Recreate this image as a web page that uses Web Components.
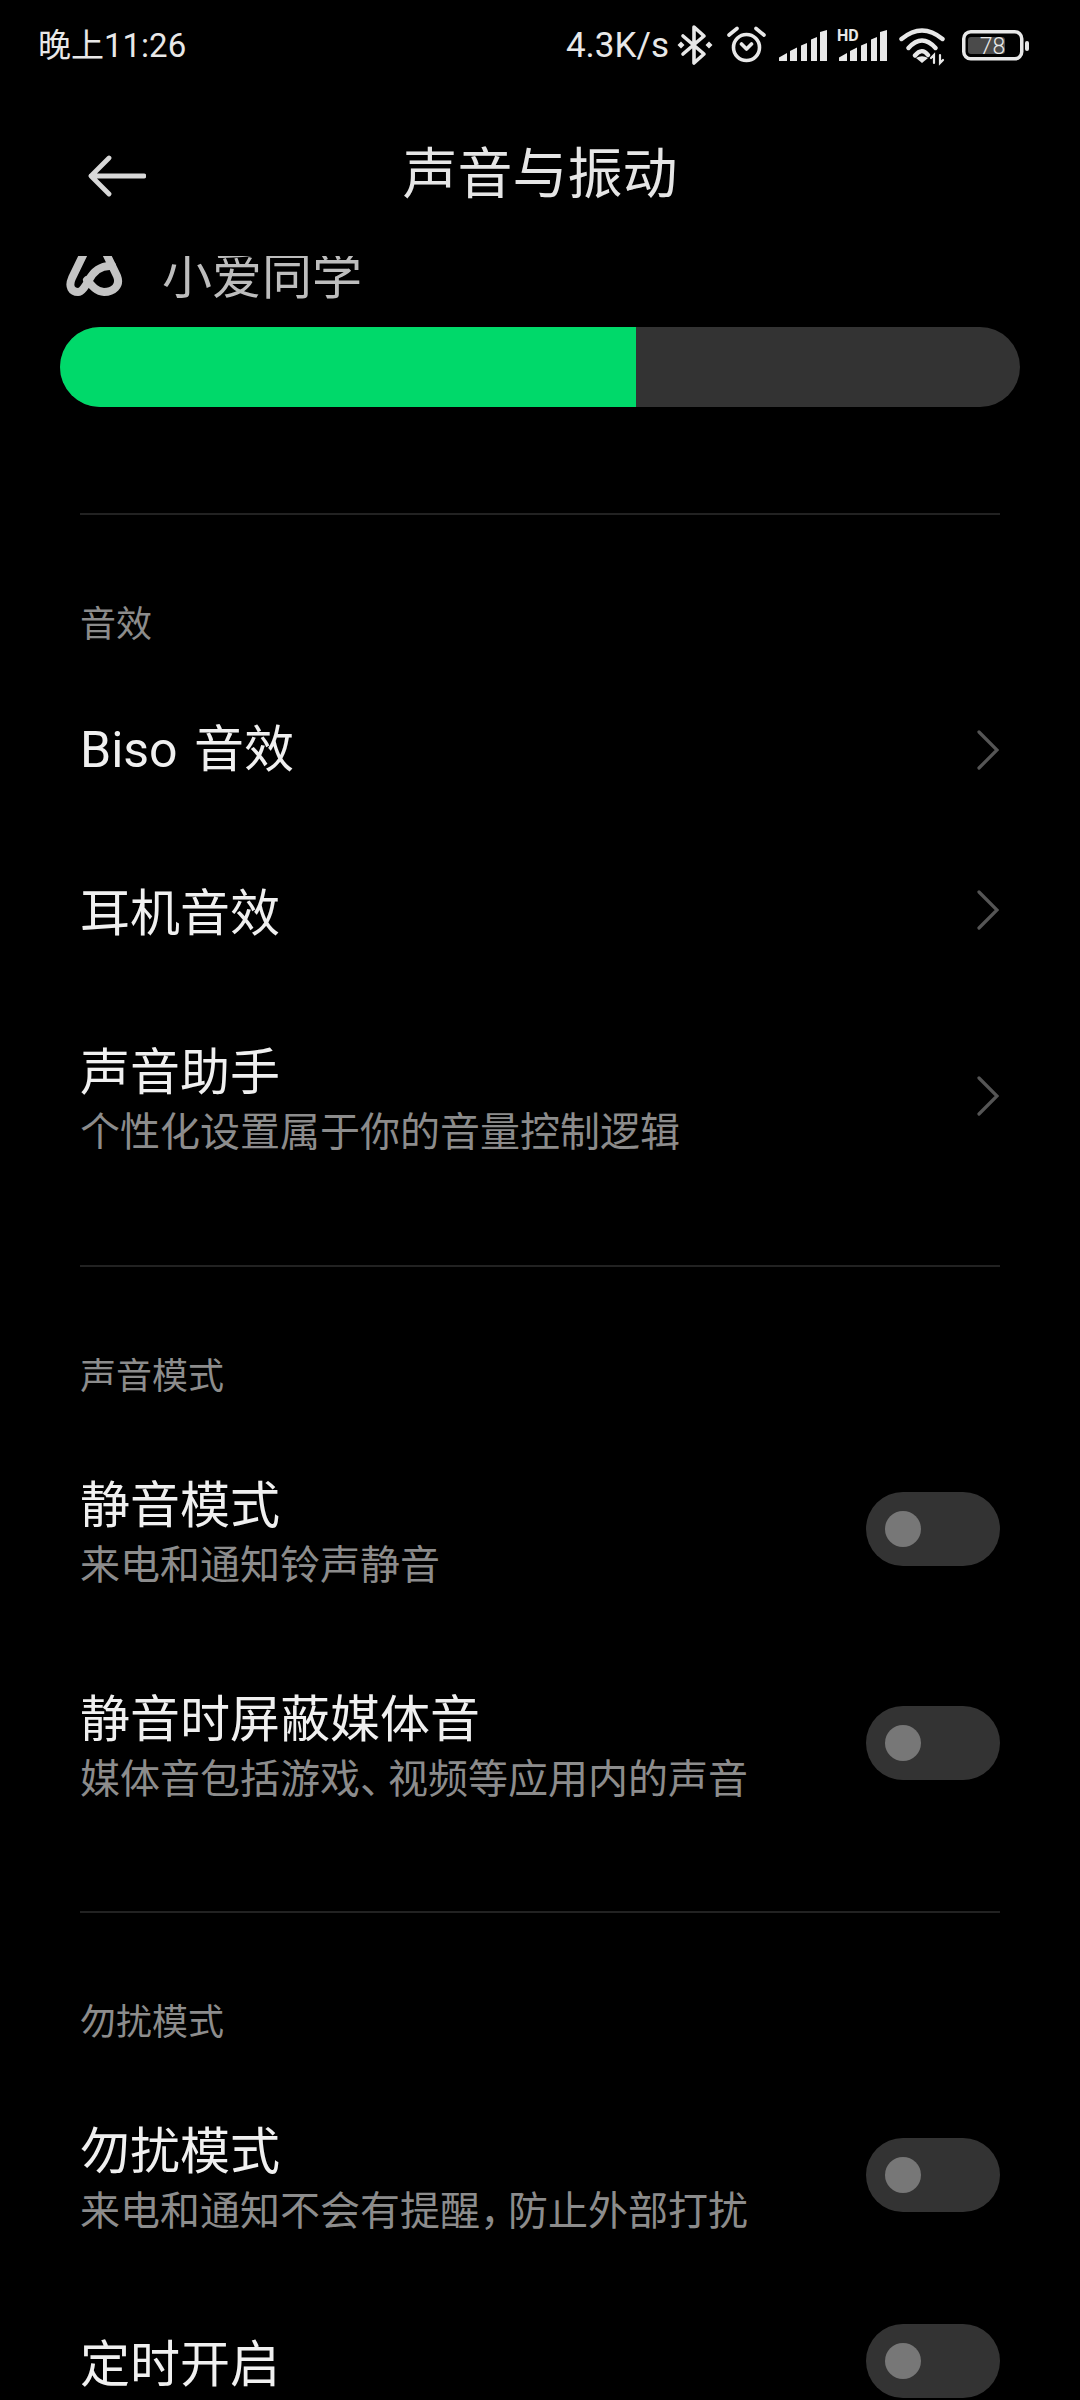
<!DOCTYPE html>
<html lang="zh-CN"><head><meta charset="utf-8"><style>
html,body{margin:0;padding:0;background:#000}
body{font-family:"Noto Sans CJK SC",sans-serif}
</style></head><body>
<settings-page>
<status-bar slot="status"></status-bar>
<action-bar slot="bar">声音与振动</action-bar>
<div style="margin-top:-17px">
<assistant-row>小爱同学</assistant-row>
<volume-bar></volume-bar>
<settings-section label="音效" style="padding-top:106px;--b:24px">
<settings-row h="160" chevron title-text="Biso 音效"></settings-row>
<settings-row h="160" chevron title-text="耳机音效"></settings-row>
<settings-row h="212" chevron title-text="声音助手" sub="个性化设置属于你的音量控制逻辑"></settings-row>
</settings-section>
<settings-section label="声音模式" style="padding-top:63px">
<settings-row h="212" style="margin-bottom:2px" toggle title-text="静音模式" sub="来电和通知铃声静音"></settings-row>
<settings-row h="212" toggle title-text="静音时屏蔽媒体音" sub="媒体音包括游戏、视频等应用内的声音"></settings-row>
</settings-section>
<settings-section label="勿扰模式" style="padding-top:62px">
<settings-row h="212" toggle title-text="勿扰模式" sub="来电和通知不会有提醒，防止外部打扰"></settings-row>
<settings-row h="160" toggle title-text="定时开启"></settings-row>
</settings-section>
</div>
</settings-page>
<script>
function def(name,html,init){customElements.define(name,class extends HTMLElement{constructor(){super();this.attachShadow({mode:'open'}).innerHTML=html;if(init)init(this)}connectedCallback(){if(this.ready)this.ready()}})}
def('settings-page',`<style>:host{display:flex;flex-direction:column;width:1080px;height:2400px;overflow:hidden;background:#000}
.scroll{flex:1;overflow:hidden;min-height:0}</style><slot name="status"></slot><slot name="bar"></slot><div class="scroll"><slot></slot></div>`);
def('status-bar',`<style>:host{display:flex;align-items:center;height:92px;padding:0 51px 0 38px;box-sizing:border-box;color:#e8e8e8;font-family:Roboto,"Noto Sans CJK SC",sans-serif}
.t{flex:1;font-size:33px;line-height:40px;margin-top:-1px}.i{display:flex;align-items:center;}svg{display:block;flex:none}.sp{font-size:35px;line-height:40px;margin-top:-1px}</style>
<div class="t">晚上11:26</div><div class="i"><span class="sp">4.3K/s</span>
<svg style="margin-left:8px" width="36" height="44" viewBox="0 0 36 44" fill="none" stroke="#e8e8e8" stroke-width="3.6" stroke-linejoin="round" stroke-linecap="round"><path d="M6 12 27 30 17 39V3L27 12 6 30"/><path d="M0.500 21 4 17.500 7.500 21 4 24.500zM28.500 21 32 17.500 35.500 21 32 24.500z" fill="#e8e8e8" stroke="none"/></svg>
<svg style="margin-left:14px" width="39" height="44" viewBox="0 0 39 44" fill="none" stroke="#e8e8e8" stroke-width="3.6" stroke-linecap="round" stroke-linejoin="round"><circle cx="19.500" cy="23.500" r="13"/><path d="M14.500 20 19.500 25 24.500 20M2 11 10 4.500M37 11 29 4.500"/></svg>
<svg style="margin-left:13px" width="48" height="44" viewBox="0 0 48 44" fill="#e8e8e8"><path d="M0 37v-3.500l8-4.500v8zM11 37V27l7-3.500V37zM22 37V21.500l6-2.500v18zM32 37V15.500l6-2.500v24zM41 37V8l7-2v31z"/></svg>
<svg style="margin-left:10px" width="50" height="44" viewBox="0 0 50 44" fill="#e8e8e8"><path d="M2 37v-3.500l8-4.500v8zM13 37V27l7-3.500V37zM24 37V21.500l6-2.500v18zM34 37V15.500l6-2.500v24zM43 37V8l7-2v31z"/><text x="0" y="17" font-family="Roboto,sans-serif" font-weight="700" font-size="16">HD</text></svg>
<svg style="margin-left:12px" width="46" height="44" viewBox="0 0 46 44" fill="none" stroke="#e8e8e8" stroke-width="4.400" stroke-linecap="round"><path d="M2.500 15Q23-2 43.500 15M9.500 24Q23 9 36.500 24M16 31.500Q23 23 29 31"/><path d="M23 39l-6-5q6-3.500 12 0z" fill="#e8e8e8" stroke="none"/><path d="M35 39v-8l-3 3M41 31v8l3-3" stroke-width="2.200"/></svg>
<svg style="margin-left:17px" width="67" height="32" viewBox="0 0 67 32"><rect x="1.750" y="1.750" width="58" height="27" rx="7" fill="none" stroke="#e8e8e8" stroke-width="3.500"/><rect x="6" y="7" width="37" height="17" rx="3" fill="#4a4a4a"/><rect x="63" y="11" width="4" height="10" rx="2" fill="#e8e8e8"/><text x="30.500" y="24" text-anchor="middle" font-family="Roboto,sans-serif" font-weight="300" font-size="23" fill="#e8e8e8">78</text></svg>
</div>`);
def('action-bar',`<style>:host{display:flex;align-items:center;justify-content:center;position:relative;height:164px;padding-bottom:10px;box-sizing:border-box;color:#e6e6e6;font-size:55px;line-height:76px}
svg{position:absolute;left:88px;top:63px}</style>
<svg width="58" height="42" viewBox="0 0 58 42" fill="none" stroke="#d8d8d8" stroke-width="4.800" stroke-linecap="round" stroke-linejoin="round"><path d="M21 3 3 21 21 39M3 21H56"/></svg><slot></slot>`);
def('assistant-row',`<style>:host{display:flex;align-items:center;height:72px;padding-left:60px;color:#bdbdbd;font-size:50px;line-height:72px}
svg{margin-right:32px;display:block;flex:none}span{margin-top:-6px}</style>
<svg width="70" height="72" viewBox="0 0 70 72" fill="none" stroke="#c4c4c4" stroke-width="8" stroke-linecap="round" stroke-linejoin="round"><path d="M27 8 12 39C8 48 12 53 18 53 22 53 26 46 29 41 33 33 41 26 52 27"/><path d="M42 6 57 37C61 47 53 53 44 53 37 53 32 47 27 41"/></svg><span><slot></slot></span>`);
def('volume-bar',`<style>:host{display:block;box-sizing:border-box;margin:16px 0 0 60px;width:960px;height:80px;border-radius:40px;background:#333;overflow:hidden}
div{width:576px;height:100%;background:#00d96a}</style><div></div>`);
def('settings-section',`<style>:host{display:block;padding-top:62px}
hr{margin:0 80px;border:0;height:2px;background:#222}
.l{margin:0 80px;padding-top:81px;color:#8c8c8c;font-size:36px;line-height:50px;height:50px}
.b{padding-top:var(--b,25px)}</style>
<hr><div class="l"></div><div class="b"><slot></slot></div>`,el=>{el.ready=()=>{el.shadowRoot.querySelector('.l').textContent=el.getAttribute('label')}});
def('settings-row',`<style>:host{display:flex;align-items:center;box-sizing:border-box;padding:0 80px}
.m{flex:1;min-width:0;padding-bottom:3px}.m.two{padding-bottom:4px}.m.latin{padding-bottom:0}.t{color:#f0f0f0;font-size:50px;line-height:68px}.t.latin{font-family:Roboto,"Noto Sans CJK SC",sans-serif;word-spacing:4px}
.s{color:#8c8c8c;font-size:40px;line-height:52px;white-space:nowrap;margin-top:1px}.s b{font-weight:400;letter-spacing:-12px}
.sw{width:134px;height:74px;border-radius:37px;background:#333;display:flex;align-items:center;padding-left:19px;box-sizing:border-box}
.sw i{width:36px;height:36px;border-radius:50%;background:#777}
svg{display:block;margin-right:1px}</style>
<div class="m"><div class="t"></div><div class="s"></div></div><div class="e"></div>`,el=>{el.ready=()=>{const r=el.shadowRoot,t=el.getAttribute('title-text'),s=el.getAttribute('sub');
r.querySelector('.t').textContent=t;if(/[a-z]/i.test(t)){r.querySelector('.t').classList.add('latin');r.querySelector('.m').classList.add('latin')}
if(s){r.querySelector('.s').innerHTML=s.replace(/[，、]/g,'<b>$&</b>');r.querySelector('.m').classList.add('two')}else r.querySelector('.s').remove();
el.style.height=el.getAttribute('h')+'px';
r.querySelector('.e').innerHTML=el.hasAttribute('toggle')?'<div class="sw"><i></i></div>':'<svg width="22" height="40" viewBox="0 0 22 40" fill="none" stroke="#555" stroke-width="3.200" stroke-linecap="round" stroke-linejoin="miter"><path d="M2 2 20 20 2 38"/></svg>'}});
</script></body></html>
